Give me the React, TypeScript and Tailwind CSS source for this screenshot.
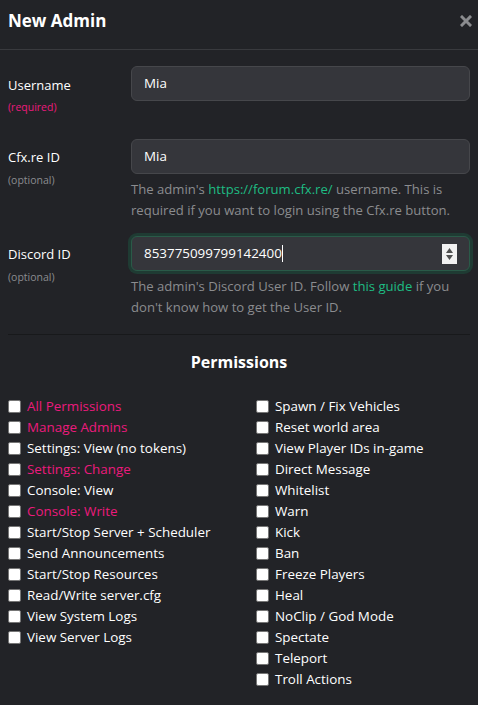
import React from "react";

const left: [string, boolean][] = [
  ["All Permissions", true],
  ["Manage Admins", true],
  ["Settings: View (no tokens)", false],
  ["Settings: Change", true],
  ["Console: View", false],
  ["Console: Write", true],
  ["Start/Stop Server + Scheduler", false],
  ["Send Announcements", false],
  ["Start/Stop Resources", false],
  ["Read/Write server.cfg", false],
  ["View System Logs", false],
  ["View Server Logs", false],
];
const right = [
  "Spawn / Fix Vehicles",
  "Reset world area",
  "View Player IDs in-game",
  "Direct Message",
  "Whitelist",
  "Warn",
  "Kick",
  "Ban",
  "Freeze Players",
  "Heal",
  "NoClip / God Mode",
  "Spectate",
  "Teleport",
  "Troll Actions",
];

function Check({ label, pink }: { label: string; pink?: boolean }) {
  return (
    <div className="flex items-center h-[21px]">
      <span className="w-[13px] h-[13px] bg-white rounded-[2px] border border-[#767676] shrink-0" />
      <span className={`ml-[6px] text-[13.4px] ${pink ? "text-[#ec1a7d]" : "text-white"}`}>{label}</span>
    </div>
  );
}

export default function App() {
  return (
    <div
      className="w-[478px] h-[705px] bg-[#222327] text-white overflow-hidden"
      style={{ fontFamily: '"Open Sans", "Noto Sans", sans-serif' }}
    >
      <div className="h-[50px] flex items-center justify-between pl-[8px] pr-[6px] pb-[7px] border-b border-[#393a3e]">
        <h1 className="text-[17px] font-bold">New Admin</h1>
        <svg width="12" height="12" viewBox="0 0 12 12">
          <path d="M2 2 L10 10 M10 2 L2 10" stroke="#8b8c8f" strokeWidth="3" strokeLinecap="square" />
        </svg>
      </div>

      <div className="px-[8px] pt-[16px]">
        <div className="flex">
          <div className="w-[123px]">
            <div className="text-[13px] leading-[20px] mt-[9px]">Username</div>
            <div className="text-[10.5px] text-[#ec1a7d] leading-[16px] mt-[4px]">(required)</div>
          </div>
          <div className="flex-1">
            <div className="h-[35px] rounded-[6px] bg-[#35363b] border border-[#46474b] flex items-center px-[12px] text-[13.4px]">Mia</div>
          </div>
        </div>

        <div className="flex mt-[24px]">
          <div className="w-[123px]">
            <div className="text-[13px] leading-[20px] mt-[8px]">Cfx.re ID</div>
            <div className="text-[10.5px] text-[#8b8c8f] leading-[16px] mt-[5px]">(optional)</div>
          </div>
          <div className="flex-1">
            <div className="h-[35px] rounded-[6px] bg-[#35363b] border border-[#46474b] flex items-center px-[12px] text-[13.4px]">Mia</div>
            <p className="text-[13.1px] leading-[21px] text-[#8b8c8f] mt-[5px]">
              The admin's <span className="text-[#1ebc83]">https://forum.cfx.re/</span> username. This is required if you want to login using the Cfx.re button.
            </p>
          </div>
        </div>

        <div className="flex mt-[15px]">
          <div className="w-[123px]">
            <div className="text-[13px] leading-[20px] mt-[8px]">Discord ID</div>
            <div className="text-[10.5px] text-[#8b8c8f] leading-[16px] mt-[5px]">(optional)</div>
          </div>
          <div className="flex-1">
            <div className="h-[35px] rounded-[6px] bg-[#35363b] border border-[#2a5a48] ring-[3px] ring-[#1f3b33] flex items-center pl-[12px] pr-[12px] text-[13.4px]">
              <span>853775099799142400</span>
              <span className="w-[1px] h-[17px] bg-white" />
              <span className="ml-auto w-[15px] h-[20px] bg-[#f2f2f2] flex flex-col items-center justify-center gap-[2px]">
                <svg width="7" height="5" viewBox="0 0 7 5"><path d="M3.5 0 L7 5 L0 5 Z" fill="#505050" /></svg>
                <svg width="7" height="5" viewBox="0 0 7 5"><path d="M0 0 L7 0 L3.5 5 Z" fill="#505050" /></svg>
              </span>
            </div>
            <p className="text-[13.1px] leading-[21px] text-[#8b8c8f] mt-[5px]">
              The admin's Discord User ID. Follow <span className="text-[#1ebc83]">this guide</span> if you don't know how to get the User ID.
            </p>
          </div>
        </div>

        <div className="mt-[16px] border-t border-[#18191b]" />

        <h2 className="text-center text-[16px] font-bold mt-[15px] leading-[24px]">Permissions</h2>

        <div className="flex mt-[22px]">
          <div className="w-[248px]">
            {left.map(([l, p]) => (
              <Check key={l} label={l} pink={p} />
            ))}
          </div>
          <div>
            {right.map((l) => (
              <Check key={l} label={l} />
            ))}
          </div>
        </div>
      </div>
    </div>
  );
}
